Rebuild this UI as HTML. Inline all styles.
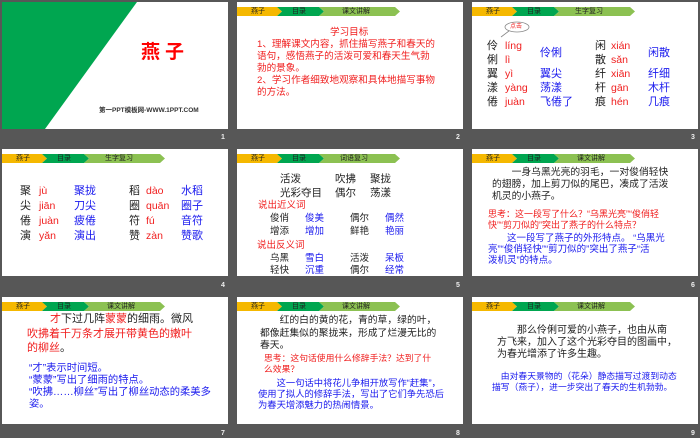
<!DOCTYPE html>
<html><head><meta charset="utf-8">
<style>
*{margin:0;padding:0;box-sizing:border-box}
html,body{width:700px;height:438px;overflow:hidden;background:#575757}
body{position:relative;font-family:"Liberation Sans","Noto Sans CJK SC","WenQuanYi Zen Hei",sans-serif}
.s{position:absolute;width:226px;height:127px;background:#fff;overflow:hidden}
.t{position:absolute;white-space:nowrap;line-height:1}
.p{position:absolute;white-space:nowrap}
.r{color:#f01e1e}.b{color:#1a1aee}.k{color:#222}
.n{position:absolute;color:#eee;font-size:7px;font-weight:bold}
.hb{position:absolute;left:0;top:5px}
.hl{position:absolute;top:5px;font-size:7px;line-height:9px;color:#222}
</style></head><body>

<div class="s" style="left:2px;top:2px">
<svg width="226" height="127" style="position:absolute;left:0;top:0"><polygon points="0,0 135,0 43,127 0,127" fill="#00a650"/></svg>
<div class="t" style="left:139px;top:41px;font-size:19px;font-weight:bold;color:#f00;letter-spacing:5px">燕子</div>
<div class="t" style="left:97px;top:106px;font-size:6.5px;font-weight:bold;color:#333">第一PPT模板网-WWW.1PPT.COM</div>
</div>
<div class="n" style="left:221px;top:134px">1</div>

<div class="s" style="left:237px;top:2px">
<svg class="hb" width="170" height="9"><polygon points="0,0 40,0 45,4.5 40,9 0,9" fill="#f5b800"/><polygon points="40,0 82,0 87,4.5 82,9 40,9 45,4.5" fill="#00a650"/><polygon points="82,0 158,0 163,4.5 158,9 82,9 87,4.5" fill="#8cc152"/></svg>
<div class="hl" style="left:14px">燕子</div><div class="hl" style="left:55px">目录</div><div class="hl" style="left:105px">课文讲解</div>
<div class="p r" style="left:20px;top:25px;font-size:9.6px;line-height:12px">
<div style="padding-left:73px">学习目标</div>
1、理解课文内容，抓住描写燕子和春天的<br>语句，感悟燕子的活泼可爱和春天生气勃<br>勃的景象。<br>2、学习作者细致地观察和具体地描写事物<br>的方法。
</div>
</div>
<div class="n" style="left:456px;top:134px">2</div>

<div class="s" style="left:472px;top:2px">
<svg class="hb" width="170" height="9"><polygon points="0,0 40,0 45,4.5 40,9 0,9" fill="#f5b800"/><polygon points="40,0 82,0 87,4.5 82,9 40,9 45,4.5" fill="#00a650"/><polygon points="82,0 158,0 163,4.5 158,9 82,9 87,4.5" fill="#8cc152"/></svg>
<div class="hl" style="left:14px">燕子</div><div class="hl" style="left:55px">目录</div><div class="hl" style="left:103px">生字复习</div>
<svg width="40" height="20" style="position:absolute;left:25px;top:19px"><ellipse cx="20" cy="6" rx="12" ry="5" fill="#fff" stroke="#888" stroke-width="0.8"/><line x1="12" y1="10" x2="4" y2="16" stroke="#888" stroke-width="0.8"/></svg>
<div class="t r" style="left:38px;top:22px;font-size:6px">点击</div>
<div class="k" style="position:absolute;left:15px;top:37px;font-size:11px;line-height:14px">伶<br>俐<br>翼<br>漾<br>倦</div>
<div class="r" style="position:absolute;left:33px;top:37px;font-size:10.5px;line-height:14px">líng<br>lì<br>yì<br>yàng<br>juàn</div>
<div class="b" style="position:absolute;left:68px;top:44px;font-size:11px;line-height:14px">伶俐</div>
<div class="b" style="position:absolute;left:68px;top:65px;font-size:11px;line-height:14px">翼尖<br>荡漾<br>飞倦了</div>
<div class="k" style="position:absolute;left:123px;top:37px;font-size:11px;line-height:14px">闲<br>散<br>纤<br>杆<br>痕</div>
<div class="r" style="position:absolute;left:139px;top:37px;font-size:10.5px;line-height:14px">xián<br>sǎn<br>xiān<br>gān<br>hén</div>
<div class="b" style="position:absolute;left:176px;top:44px;font-size:11px;line-height:14px">闲散</div>
<div class="b" style="position:absolute;left:176px;top:65px;font-size:11px;line-height:14px">纤细<br>木杆<br>几痕</div>
</div>
<div class="n" style="left:691px;top:134px">3</div>

<div class="s" style="left:2px;top:149px">
<svg class="hb" width="170" height="9"><polygon points="0,0 40,0 45,4.5 40,9 0,9" fill="#f5b800"/><polygon points="40,0 82,0 87,4.5 82,9 40,9 45,4.5" fill="#00a650"/><polygon points="82,0 158,0 163,4.5 158,9 82,9 87,4.5" fill="#8cc152"/></svg>
<div class="hl" style="left:14px">燕子</div><div class="hl" style="left:55px">目录</div><div class="hl" style="left:103px">生字复习</div>
<div class="k" style="position:absolute;left:18px;top:35px;font-size:11px;line-height:15px">聚<br>尖<br>倦<br>演</div>
<div class="r" style="position:absolute;left:37px;top:35px;font-size:10.5px;line-height:15px">jù<br>jiān<br>juàn<br>yǎn</div>
<div class="b" style="position:absolute;left:72px;top:35px;font-size:11px;line-height:15px">聚拢<br>刀尖<br>疲倦<br>演出</div>
<div class="k" style="position:absolute;left:127px;top:35px;font-size:11px;line-height:15px">稻<br>圈<br>符<br>赞</div>
<div class="r" style="position:absolute;left:144px;top:35px;font-size:10.5px;line-height:15px">dào<br>quān<br>fú<br>zàn</div>
<div class="b" style="position:absolute;left:179px;top:35px;font-size:11px;line-height:15px">水稻<br>圈子<br>音符<br>赞歌</div>
</div>
<div class="n" style="left:221px;top:282px">4</div>

<div class="s" style="left:237px;top:149px">
<svg class="hb" width="170" height="9"><polygon points="0,0 40,0 45,4.5 40,9 0,9" fill="#f5b800"/><polygon points="40,0 82,0 87,4.5 82,9 40,9 45,4.5" fill="#00a650"/><polygon points="82,0 158,0 163,4.5 158,9 82,9 87,4.5" fill="#8cc152"/></svg>
<div class="hl" style="left:14px">燕子</div><div class="hl" style="left:55px">目录</div><div class="hl" style="left:103px">词语复习</div>
<div class="t k" style="left:43px;top:25px;font-size:10.5px">活泼</div>
<div class="t k" style="left:98px;top:25px;font-size:10.5px">吹拂</div>
<div class="t k" style="left:133px;top:25px;font-size:10.5px">聚拢</div>
<div class="t k" style="left:43px;top:39px;font-size:10.5px">光彩夺目</div>
<div class="t k" style="left:98px;top:39px;font-size:10.5px">偶尔</div>
<div class="t k" style="left:133px;top:39px;font-size:10.5px">荡漾</div>
<div class="t r" style="left:21px;top:52px;font-size:9.5px">说出近义词</div>
<div class="t k" style="left:33px;top:65px;font-size:9.5px">俊俏</div><div class="t b" style="left:68px;top:65px;font-size:9.5px">俊美</div><div class="t k" style="left:113px;top:65px;font-size:9.5px">偶尔</div><div class="t b" style="left:148px;top:65px;font-size:9.5px">偶然</div>
<div class="t k" style="left:33px;top:78px;font-size:9.5px">增添</div><div class="t b" style="left:68px;top:78px;font-size:9.5px">增加</div><div class="t k" style="left:113px;top:78px;font-size:9.5px">鲜艳</div><div class="t b" style="left:148px;top:78px;font-size:9.5px">艳丽</div>
<div class="t r" style="left:20px;top:92px;font-size:9.5px">说出反义词</div>
<div class="t k" style="left:33px;top:105px;font-size:9.5px">乌黑</div><div class="t b" style="left:68px;top:105px;font-size:9.5px">雪白</div><div class="t k" style="left:113px;top:105px;font-size:9.5px">活泼</div><div class="t b" style="left:148px;top:105px;font-size:9.5px">呆板</div>
<div class="t k" style="left:33px;top:117px;font-size:9.5px">轻快</div><div class="t b" style="left:68px;top:117px;font-size:9.5px">沉重</div><div class="t k" style="left:113px;top:117px;font-size:9.5px">偶尔</div><div class="t b" style="left:148px;top:117px;font-size:9.5px">经常</div>
</div>
<div class="n" style="left:456px;top:282px">5</div>

<div class="s" style="left:472px;top:149px">
<svg class="hb" width="170" height="9"><polygon points="0,0 40,0 45,4.5 40,9 0,9" fill="#f5b800"/><polygon points="40,0 82,0 87,4.5 82,9 40,9 45,4.5" fill="#00a650"/><polygon points="82,0 158,0 163,4.5 158,9 82,9 87,4.5" fill="#8cc152"/></svg>
<div class="hl" style="left:14px">燕子</div><div class="hl" style="left:55px">目录</div><div class="hl" style="left:105px">课文讲解</div>
<div class="p k" style="left:20px;top:18px;font-size:9.8px;line-height:12px">　　一身乌黑光亮的羽毛，一对俊俏轻快<br>的翅膀，加上剪刀似的尾巴，凑成了活泼<br>机灵的小燕子。</div>
<div class="p r" style="left:16px;top:60px;font-size:9px;line-height:11px">思考：这一段写了什么？“乌黑光亮”“俊俏轻<br>快”“剪刀似的”突出了燕子的什么特点？</div>
<div class="p b" style="left:16px;top:84px;font-size:9.5px;line-height:11px">　　这一段写了燕子的外形特点。 “乌黑光<br>亮”“俊俏轻快”“剪刀似的”突出了燕子“活<br>泼机灵”的特点。</div>
</div>
<div class="n" style="left:691px;top:282px">6</div>

<div class="s" style="left:2px;top:297px">
<svg class="hb" width="170" height="9"><polygon points="0,0 40,0 45,4.5 40,9 0,9" fill="#f5b800"/><polygon points="40,0 82,0 87,4.5 82,9 40,9 45,4.5" fill="#00a650"/><polygon points="82,0 158,0 163,4.5 158,9 82,9 87,4.5" fill="#8cc152"/></svg>
<div class="hl" style="left:14px">燕子</div><div class="hl" style="left:55px">目录</div><div class="hl" style="left:105px">课文讲解</div>
<div class="t k" style="left:48px;top:17px;font-size:11px"><span class="r">才</span>下过几阵<span class="r">蒙蒙</span>的细雨。微风</div>
<div class="t r" style="left:25px;top:32px;font-size:11px">吹拂着千万条才展开带黄色的嫩叶</div>
<div class="t r" style="left:25px;top:46px;font-size:11px">的柳丝<span class="k">。</span></div>
<div class="p b" style="left:27px;top:66px;font-size:10.3px;line-height:12px">“才”表示时间短。<br>“蒙蒙”写出了细雨的特点。<br>“吹拂……柳丝”写出了柳丝动态的柔美多<br>姿。</div>
</div>
<div class="n" style="left:221px;top:430px">7</div>

<div class="s" style="left:237px;top:297px">
<svg class="hb" width="170" height="9"><polygon points="0,0 40,0 45,4.5 40,9 0,9" fill="#f5b800"/><polygon points="40,0 82,0 87,4.5 82,9 40,9 45,4.5" fill="#00a650"/><polygon points="82,0 158,0 163,4.5 158,9 82,9 87,4.5" fill="#8cc152"/></svg>
<div class="hl" style="left:14px">燕子</div><div class="hl" style="left:55px">目录</div><div class="hl" style="left:105px">课文讲解</div>
<div class="p k" style="left:23px;top:18px;font-size:9.8px;line-height:12.5px">　　红的白的黄的花，青的草，绿的叶，<br>都像赶集似的聚拢来，形成了烂漫无比的<br>春天。</div>
<div class="p r" style="left:27px;top:56px;font-size:8.8px;line-height:11px">思考：这句话使用什么修辞手法？达到了什<br>么效果？</div>
<div class="p b" style="left:21px;top:81px;font-size:9.3px;line-height:11px">　　这一句话中将花儿争相开放写作“赶集”，<br>使用了拟人的修辞手法，写出了它们争先恐后<br>为春天增添魅力的热闹情景。</div>
</div>
<div class="n" style="left:456px;top:430px">8</div>

<div class="s" style="left:472px;top:297px">
<svg class="hb" width="170" height="9"><polygon points="0,0 40,0 45,4.5 40,9 0,9" fill="#f5b800"/><polygon points="40,0 82,0 87,4.5 82,9 40,9 45,4.5" fill="#00a650"/><polygon points="82,0 158,0 163,4.5 158,9 82,9 87,4.5" fill="#8cc152"/></svg>
<div class="hl" style="left:14px">燕子</div><div class="hl" style="left:55px">目录</div><div class="hl" style="left:105px">课文讲解</div>
<div class="p k" style="left:25px;top:28px;font-size:10px;line-height:12px">　　那么伶俐可爱的小燕子，也由从南<br>方飞来，加入了这个光彩夺目的图画中，<br>为春光增添了许多生趣。</div>
<div class="p b" style="left:20px;top:74px;font-size:8.8px;line-height:11px">　由对春天景物的（花朵）静态描写过渡到动态<br>描写（燕子），进一步突出了春天的生机勃勃。</div>
</div>
<div class="n" style="left:691px;top:430px">9</div>

</body></html>
